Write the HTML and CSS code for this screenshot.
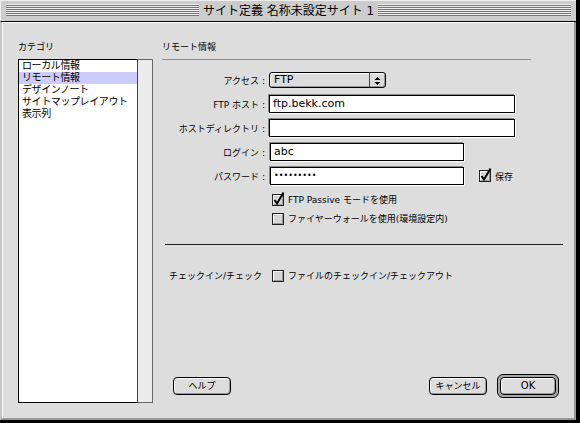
FILE: index.html
```html
<!DOCTYPE html>
<html lang="ja">
<head>
<meta charset="utf-8">
<title>サイト定義</title>
<link rel="stylesheet" href="styles.css">
</head>
<body>
<div class="window">
  <div class="titlebar">
    <div class="stripes"></div>
    <div class="title">サイト定義 名称未設定サイト 1</div>
    <div class="stripes"></div>
  </div>
  <div class="content">
    <div class="left">
      <div class="heading">カテゴリ</div>
      <div class="listbox">
        <ul class="items">
          <li>ローカル情報</li>
          <li class="sel">リモート情報</li>
          <li>デザインノート</li>
          <li>サイトマップレイアウト</li>
          <li>表示列</li>
        </ul>
        <div class="track"></div>
      </div>
    </div>
    <div class="right">
      <div class="heading">リモート情報</div>
      <div class="rule"></div>
      <div class="form">
        <div class="row row-access">
          <div class="label">アクセス :</div>
          <div class="popup">
            <span class="popup-text">FTP</span>
            <span class="popup-arrows">
              <svg width="15" height="14" viewBox="0 0 15 14"><polygon points="4.5,7 10.5,7 7.5,4" fill="#000"/><polygon points="4.5,9 10.5,9 7.5,12" fill="#000"/></svg>
            </span>
          </div>
        </div>
        <div class="row">
          <div class="label">FTP ホスト :</div>
          <div class="field field-long">ftp.bekk.com</div>
        </div>
        <div class="row">
          <div class="label">ホストディレクトリ :</div>
          <div class="field field-long"></div>
        </div>
        <div class="row">
          <div class="label">ログイン :</div>
          <div class="field field-short">abc</div>
        </div>
        <div class="row row-pass">
          <div class="label">パスワード :</div>
          <div class="field field-short"><span class="dots">•••••••••</span></div>
          <svg class="cb cb-save" width="12" height="12" viewBox="0 0 12 12"><rect x="0.5" y="0.5" width="11" height="11" fill="#d6d6d6" stroke="#222"/><path d="M1.5 10.5V1.5H10.5" stroke="#fff" fill="none"/><path d="M1.5 10.5H10.5V1.5" stroke="#999" fill="none"/><polyline points="2.5,6 5,9.5 11.5,-1.5" stroke="#000" stroke-width="2" fill="none"/></svg>
          <span class="cb-text">保存</span>
        </div>
        <div class="row-check">
          <svg class="cb" width="12" height="12" viewBox="0 0 12 12"><rect x="0.5" y="0.5" width="11" height="11" fill="#d6d6d6" stroke="#222"/><path d="M1.5 10.5V1.5H10.5" stroke="#fff" fill="none"/><path d="M1.5 10.5H10.5V1.5" stroke="#999" fill="none"/><polyline points="2.5,6 5,9.5 11.5,-1.5" stroke="#000" stroke-width="2" fill="none"/></svg>
          <span class="cb-text">FTP Passive モードを使用</span>
        </div>
        <div class="row-check">
          <svg class="cb" width="12" height="12" viewBox="0 0 12 12"><rect x="0.5" y="0.5" width="11" height="11" fill="#d6d6d6" stroke="#222"/><path d="M1.5 10.5V1.5H10.5" stroke="#fff" fill="none"/><path d="M1.5 10.5H10.5V1.5" stroke="#999" fill="none"/></svg>
          <span class="cb-text">ファイヤーウォールを使用(環境設定内)</span>
        </div>
      </div>
      <div class="rule2"></div>
      <div class="checkin">
        <div class="checkin-label">チェックイン/チェック</div>
        <svg class="cb" width="12" height="12" viewBox="0 0 12 12"><rect x="0.5" y="0.5" width="11" height="11" fill="#d6d6d6" stroke="#222"/><path d="M1.5 10.5V1.5H10.5" stroke="#fff" fill="none"/><path d="M1.5 10.5H10.5V1.5" stroke="#999" fill="none"/></svg>
        <span class="cb-text">ファイルのチェックイン/チェックアウト</span>
      </div>
      <div class="buttons">
        <div class="btn btn-help">ヘルプ</div>
        <div class="btn btn-cancel">キャンセル</div>
        <div class="ring"><div class="btn btn-ok">OK</div></div>
      </div>
    </div>
  </div>
</div>
</body>
</html>
```
FILE: styles.css
```css
* { box-sizing: border-box; }
html, body { margin: 0; padding: 0; }
body {
  width: 580px;
  height: 423px;
  overflow: hidden;
  background: #dddddd;
  font-family: "DejaVu Sans", "Noto Sans CJK JP", sans-serif;
  font-size: 9px;
  color: #000;
}
.window {
  width: 580px;
  height: 423px;
  border-right: 4px solid #000;
  border-bottom: 3px solid #000;
  display: flex;
  flex-direction: column;
  background: #dddddd;
}
.titlebar {
  height: 22px;
  flex: none;
  background: #cccccc;
  border-top: 1px solid #eeeeee;
  border-left: 1px solid #eeeeee;
  border-bottom: 1px solid #000;
  display: flex;
  align-items: flex-start;
  padding: 0 5px;
}
.stripes {
  flex: 1;
  height: 12px;
  margin-top: 3px;
  background: repeating-linear-gradient(to bottom, #eeeeee 0, #eeeeee 1px, #777777 1px, #777777 2px);
}
.title {
  padding: 0 4px;
  font-size: 12px;
  line-height: 20px;
  white-space: nowrap;
}
.content {
  flex: 1;
  display: flex;
  align-items: flex-start;
  border-left: 2px solid #c4c4c4;
  border-right: 2px solid #999;
  border-bottom: 2px solid #999;
  box-shadow: inset 1px 1px 0 #fff;
  padding: 19px 0 0 16px;
}
.left { width: 135px; flex: none; }
.right { width: 401px; flex: none; margin-left: 9px; }
.heading {
  height: 12px;
  line-height: 12px;
  font-size: 9px;
  white-space: nowrap;
}
.left .heading { margin-bottom: 6px; }
.listbox { display: flex; height: 344px; }
.items {
  width: 120px;
  margin: 0;
  padding: 0;
  list-style: none;
  background: #fff;
  border: 1px solid #000;
  border-right-color: #444;
}
.items li {
  height: 12px;
  line-height: 12px;
  padding-left: 3px;
  font-size: 10px;
  letter-spacing: -0.4px;
  white-space: nowrap;
}
.items li.sel { background: #ccccff; }
.track {
  width: 15px;
  background: #ececec;
  border: 1px solid #666;
  border-left: none;
}
.rule {
  margin-top: 6px;
  width: 369px;
  height: 1px;
  background: #8c8c8c;
}
.form { margin-top: 12px; }
.row {
  display: flex;
  align-items: center;
  height: 18px;
  margin-bottom: 6px;
}
.row-access { height: 16px; margin-bottom: 7px; }
.row-pass { margin-bottom: 8px; }
.label {
  width: 103px;
  flex: none;
  text-align: right;
  white-space: nowrap;
  font-size: 9px;
}
.popup {
  margin-left: 4px;
  width: 117px;
  height: 16px;
  display: flex;
  align-items: center;
  border: 1px solid #000;
  border-radius: 3px;
  background: #dcdcdc;
  box-shadow: inset 1px 1px 0 #fff, inset -1px -1px 0 #9a9a9a;
}
.popup-text {
  padding-left: 4px;
  font-size: 11px;
  line-height: 14px;
}
.popup-arrows {
  margin-left: auto;
  width: 16px;
  height: 14px;
  border-left: 1px solid #444;
  display: flex;
}
.field {
  height: 18px;
  border: 1px solid #000;
  background: #fff;
  box-shadow: -1px -1px 0 #8a8a8a, 1px 1px 0 #fff;
  font-size: 11px;
  line-height: 16px;
  padding-left: 3px;
  white-space: nowrap;
}
.field-long { margin-left: 4px; width: 246px; }
.field-short { margin-left: 5px; width: 194px; }
.dots { font-size: 8px; vertical-align: top; line-height: 16px; }
.cb { flex: none; overflow: visible; display: block; }
.cb-save { margin-left: 15px; }
.cb-text { margin-left: 4px; white-space: nowrap; font-size: 9px; }
.row-check {
  display: flex;
  align-items: center;
  height: 13px;
  margin-bottom: 6px;
  padding-left: 110px;
}
.rule2 {
  margin-top: 19px;
  margin-left: 3px;
  width: 398px;
  height: 1px;
  background: #222;
}
.checkin {
  display: flex;
  align-items: center;
  height: 13px;
  margin-top: 24px;
}
.checkin-label {
  margin-left: 7px;
  width: 103px;
  white-space: nowrap;
  font-size: 9px;
}
.buttons {
  display: flex;
  align-items: center;
  margin-top: 92px;
  height: 24px;
}
.btn {
  height: 18px;
  border: 1px solid #000;
  border-radius: 4px;
  background: #dddddd;
  box-shadow: inset 1px 1px 0 #fff, inset -1px -1px 0 #999;
  text-align: center;
  line-height: 16px;
  font-size: 9px;
  white-space: nowrap;
}
.btn-help { width: 58px; margin-left: 11px; }
.btn-cancel { width: 58px; margin-left: auto; }
.btn-ok { width: 56px; font-size: 10px; }
.ring {
  margin-left: 10px;
  margin-right: 4px;
  border: 1px solid #000;
  border-radius: 6px;
  padding: 2px;
  background: #a8a8a8;
}
```
